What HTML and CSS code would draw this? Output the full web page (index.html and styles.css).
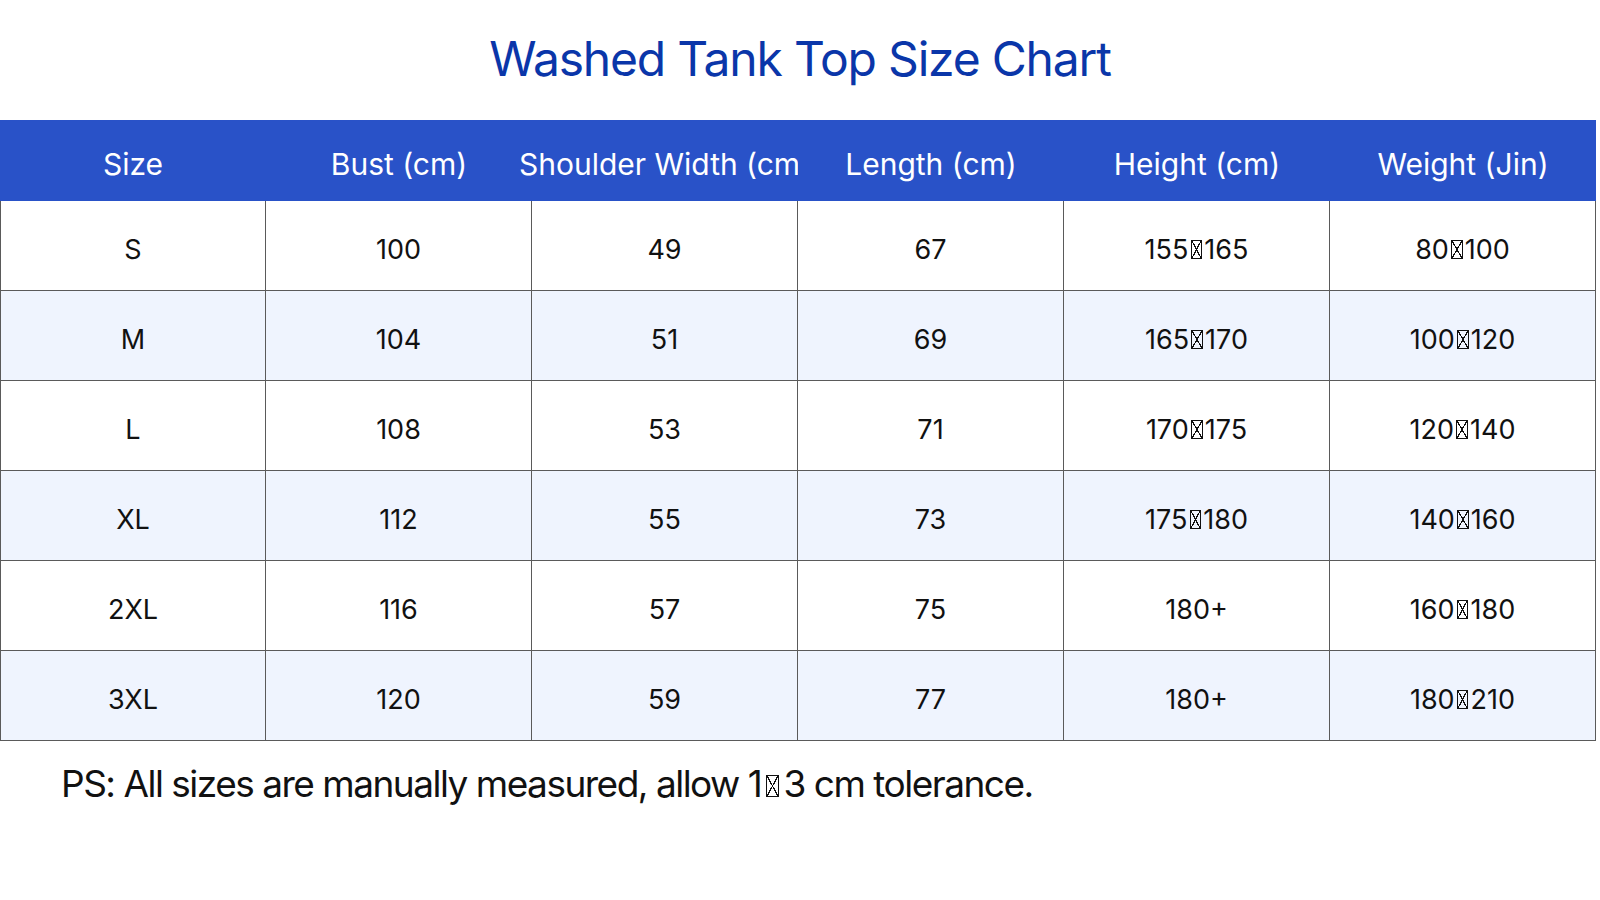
FILE: index.html
```html
<!DOCTYPE html>
<html lang="en">
<head>
<meta charset="utf-8">
<title>Washed Tank Top Size Chart</title>
<link rel="stylesheet" href="styles.css">
</head>
<body>
<h1 class="title">Washed Tank Top Size Chart</h1>
<div class="chart">
  <div class="hcell">Size</div>
  <div class="hcell">Bust (cm)</div>
  <div class="hcell">Shoulder Width (cm)</div>
  <div class="hcell">Length (cm)</div>
  <div class="hcell">Height (cm)</div>
  <div class="hcell">Weight (Jin)</div>

  <div class="cell first">S</div><div class="cell">100</div><div class="cell">49</div><div class="cell">67</div><div class="cell">155<span class="tofu" role="img" aria-label="–"></span>165</div><div class="cell">80<span class="tofu" role="img" aria-label="–"></span>100</div>
  <div class="cell first alt">M</div><div class="cell alt">104</div><div class="cell alt">51</div><div class="cell alt">69</div><div class="cell alt">165<span class="tofu" role="img" aria-label="–"></span>170</div><div class="cell alt">100<span class="tofu" role="img" aria-label="–"></span>120</div>
  <div class="cell first">L</div><div class="cell">108</div><div class="cell">53</div><div class="cell">71</div><div class="cell">170<span class="tofu" role="img" aria-label="–"></span>175</div><div class="cell">120<span class="tofu" role="img" aria-label="–"></span>140</div>
  <div class="cell first alt">XL</div><div class="cell alt">112</div><div class="cell alt">55</div><div class="cell alt">73</div><div class="cell alt">175<span class="tofu" role="img" aria-label="–"></span>180</div><div class="cell alt">140<span class="tofu" role="img" aria-label="–"></span>160</div>
  <div class="cell first">2XL</div><div class="cell">116</div><div class="cell">57</div><div class="cell">75</div><div class="cell">180+</div><div class="cell">160<span class="tofu" role="img" aria-label="–"></span>180</div>
  <div class="cell first alt">3XL</div><div class="cell alt">120</div><div class="cell alt">59</div><div class="cell alt">77</div><div class="cell alt">180+</div><div class="cell alt">180<span class="tofu" role="img" aria-label="–"></span>210</div>
</div>
<p class="note">PS: All sizes are manually measured, allow 1<span class="tofu note-tofu" role="img" aria-label="–"></span>3 cm tolerance.</p>
</body>
</html>
```
FILE: styles.css
```css
html, body {
  margin: 0;
  padding: 0;
  background: #ffffff;
}
body {
  font-family: Inter, "Noto Sans", sans-serif;
  width: 1600px;
}
.title {
  margin: 0;
  height: 120px;
  display: flex;
  align-items: center;
  justify-content: center;
  font-size: 48px;
  font-weight: 400;
  letter-spacing: -1.2px;
  color: #0a36a9;
  padding-bottom: 3px;
  box-sizing: border-box;
}
.chart {
  display: grid;
  grid-template-columns: repeat(6, 266px);
  width: 1597px;
}
.hcell {
  height: 81px;
  box-sizing: border-box;
  padding-top: 7px;
  background: #2952c8;
  color: #ffffff;
  font-size: 30px;
  display: flex;
  align-items: center;
  justify-content: center;
  white-space: nowrap;
}
.cell {
  height: 90px;
  box-sizing: border-box;
  padding-top: 8px;
  border-right: 1px solid #5a5a5a;
  border-bottom: 1px solid #5a5a5a;
  display: flex;
  align-items: center;
  justify-content: center;
  font-size: 27px;
  color: #111111;
  background: #ffffff;
}
.cell.first {
  border-left: 1px solid #5a5a5a;
}
.cell.alt {
  background: #eff4fe;
}
.tofu {
  display: inline-block;
  box-sizing: border-box;
  width: 0.43em;
  height: 0.72em;
  margin: 0 0.08em;
  border: 1px solid currentColor;
  background:
    linear-gradient(to top right, transparent calc(50% - 0.6px), currentColor calc(50% - 0.6px), currentColor calc(50% + 0.6px), transparent calc(50% + 0.6px)),
    linear-gradient(to bottom right, transparent calc(50% - 0.6px), currentColor calc(50% - 0.6px), currentColor calc(50% + 0.6px), transparent calc(50% + 0.6px));
  vertical-align: baseline;
}
.note-tofu {
  width: 0.36em;
  height: 0.6em;
  margin: 0 0.12em;
}
.note {
  margin: 0;
  padding: 20px 0 0 61px;
  font-size: 37px;
  color: #111111;
  letter-spacing: -1.5px;
}
```
